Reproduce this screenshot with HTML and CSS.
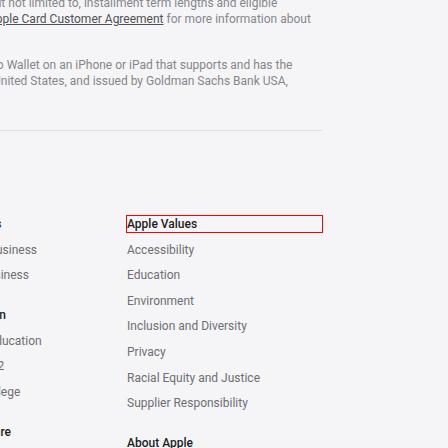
FILE: index.html
```html
<!DOCTYPE html>
<html lang="en">
<head>
<meta charset="utf-8">
<title>Apple Footer</title>
<link rel="stylesheet" href="styles.css">
</head>
<body>
<footer class="footer">
  <section class="legal">
    <p class="legal-p legal-p-1">but not limited to, installment term lengths and eligible<br><a class="legal-link" href="#">Apple Card Customer Agreement</a> for more information about</p>
    <p class="legal-p legal-p-2">to Wallet on an iPhone or iPad that supports and has the<br>United States, and issued by Goldman Sachs Bank USA,</p>
  </section>
  <hr class="divider">
  <nav class="directory">
    <div class="dir-col">
      <div class="dir-section">
        <h3 class="dir-head">For Business</h3>
        <ul class="dir-list">
          <li class="dir-item"><a href="#">Apple and Business</a></li>
          <li class="dir-item"><a href="#">Shop for Business</a></li>
        </ul>
      </div>
      <div class="dir-section">
        <h3 class="dir-head">For Education</h3>
        <ul class="dir-list">
          <li class="dir-item"><a href="#">Apple and Education</a></li>
          <li class="dir-item"><a href="#">Shop for K-12</a></li>
          <li class="dir-item"><a href="#">Shop for College</a></li>
        </ul>
      </div>
      <div class="dir-section">
        <h3 class="dir-head">For Healthcare</h3>
        <ul class="dir-list">
          <li class="dir-item"><a href="#">Apple in Healthcare</a></li>
          <li class="dir-item"><a href="#">Health on Apple Watch</a></li>
        </ul>
      </div>
    </div>
    <div class="dir-col">
      <div class="dir-section">
        <h3 class="dir-head dir-head-focus">Apple Values</h3>
        <ul class="dir-list">
          <li class="dir-item"><a href="#">Accessibility</a></li>
          <li class="dir-item"><a href="#">Education</a></li>
          <li class="dir-item"><a href="#">Environment</a></li>
          <li class="dir-item"><a href="#">Inclusion and Diversity</a></li>
          <li class="dir-item"><a href="#">Privacy</a></li>
          <li class="dir-item"><a href="#">Racial Equity and Justice</a></li>
          <li class="dir-item"><a href="#">Supplier Responsibility</a></li>
        </ul>
      </div>
      <div class="dir-section">
        <h3 class="dir-head">About Apple</h3>
        <ul class="dir-list">
          <li class="dir-item"><a href="#">Newsroom</a></li>
          <li class="dir-item"><a href="#">Apple Leadership</a></li>
        </ul>
      </div>
    </div>
  </nav>
</footer>
</body>
</html>
```
FILE: styles.css
```css
html, body {
  margin: 0;
  padding: 0;
}
body {
  background: #f5f5f7;
  overflow: hidden;
  width: 448px;
  height: 448px;
  font-family: Roboto, "Liberation Sans", sans-serif;
  font-size: 12px;
  line-height: 16px;
  color: #86868b;
}
.footer {
  display: block;
}
.legal {
  margin-top: -5px;
}
.legal-p {
  margin: 0;
  white-space: nowrap;
}
.legal-p-1 {
  margin-left: -12px;
  margin-bottom: 30px;
}
.legal-p-2 {
  margin-left: -7px;
}
.legal-link {
  color: #515154;
  text-decoration: underline;
}
.divider {
  border: 0;
  border-top: 1px solid #e0e0e4;
  margin: 41px 0 0 -68px;
  width: 390px;
}
.directory {
  display: grid;
  grid-template-columns: 195px 195px;
  margin-left: -68px;
  padding-top: 85px;
}
.dir-section {
  margin-bottom: 24px;
}
.dir-head {
  margin: 0 0 9.6px;
  font-size: 12px;
  line-height: 16px;
  font-weight: 500;
  color: #1d1d1f;
}
.dir-head-focus {
  outline: 1px solid #ff0000;
}
.dir-list {
  list-style: none;
  margin: 0;
  padding: 0;
}
.dir-item {
  margin-bottom: 9.6px;
}
.dir-item:last-child {
  margin-bottom: 0;
}
.dir-item a {
  color: #6e6e73;
  text-decoration: none;
}
```
